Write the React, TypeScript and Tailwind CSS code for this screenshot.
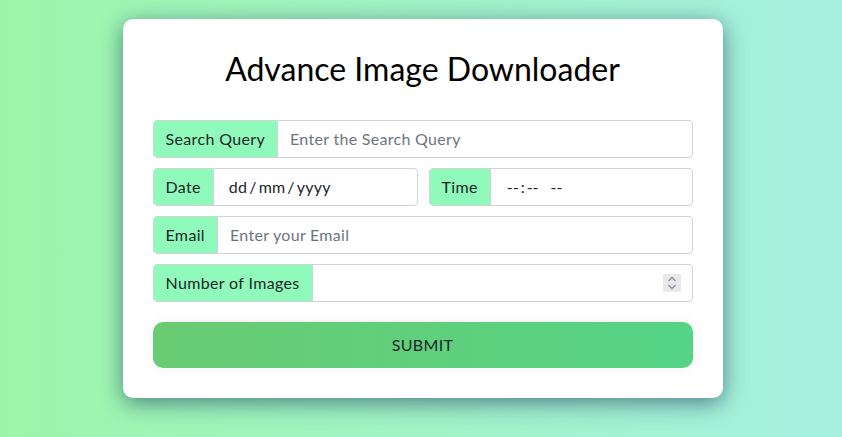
import React from 'react'

const font = { fontFamily: 'Lato, "Open Sans", sans-serif' }

function Label({ children }: { children: React.ReactNode }) {
  return (
    <span className="flex items-center px-3 bg-[#8ffab9] text-[#212529] text-[16px] tracking-[0.35px] whitespace-nowrap border-r border-[#ced4da]">
      {children}
    </span>
  )
}

export default function App() {
  return (
    <div
      className="w-full h-[437px] overflow-hidden bg-gradient-to-r from-[#9cf6aa] to-[#a6efdf] pt-[19px] pl-[3px]"
      style={font}
    >
      <div className="w-[600px] mx-auto bg-white rounded-[10px] shadow-[0_5px_22px_rgba(25,55,95,0.6)] px-[30px] pt-[31px] pb-[30px]">
        <h1 className="text-center text-[32px] leading-[38px] text-black mb-[32px]">Advance Image Downloader</h1>

        <div className="flex flex-col gap-[10px]">
          {/* search */}
          <div className="flex h-[38px] border border-[#ced4da] rounded-[4px] overflow-hidden">
            <Label>Search Query</Label>
            <input
              className="flex-1 px-3 text-[16px] tracking-[0.3px] outline-none placeholder:text-[#6c757d]"
              placeholder="Enter the Search Query"
            />
          </div>

          {/* date + time */}
          <div className="flex gap-[11px]">
            <div className="flex h-[38px] w-[265px] border border-[#ced4da] rounded-[4px] overflow-hidden">
              <Label>Date</Label>
              <div className="flex-1 flex items-center pl-[15px] text-[16px] text-[#212529] tracking-[0.2px]">
                dd<span className="mx-[2px]">/</span>mm<span className="mx-[2px]">/</span>yyyy
              </div>
            </div>
            <div className="flex h-[38px] flex-1 border border-[#ced4da] rounded-[4px] overflow-hidden">
              <Label>Time</Label>
              <div className="flex-1 flex items-center pl-[16px] text-[16px] text-[#212529]">
                --<span className="mx-[2px]">:</span>--<span className="ml-[12px]">--</span>
              </div>
            </div>
          </div>

          {/* email */}
          <div className="flex h-[38px] border border-[#ced4da] rounded-[4px] overflow-hidden">
            <Label>Email</Label>
            <input
              type="email"
              className="flex-1 px-3 text-[16px] tracking-[0.3px] outline-none placeholder:text-[#6c757d]"
              placeholder="Enter your Email"
            />
          </div>

          {/* number */}
          <div className="flex h-[38px] border border-[#ced4da] rounded-[4px] overflow-hidden">
            <Label>Number of Images</Label>
            <div className="flex-1 flex items-center justify-end pr-[11px]">
              <span className="flex items-center justify-center w-[18px] h-[18px] bg-[#e9e9ed]">
                <svg width="10" height="14" viewBox="0 0 10 14" fill="none" stroke="#8a8a94" strokeWidth="1.3">
                  <path d="M1.5 5 L5 1.5 L8.5 5" />
                  <path d="M1.5 9 L5 12.5 L8.5 9" />
                </svg>
              </span>
            </div>
          </div>
        </div>

        <button className="mt-[20px] w-full h-[46px] rounded-[10px] bg-gradient-to-r from-[#69cb72] to-[#54d485] text-[#212529] text-[16px] tracking-[0.3px] shadow-[0_0_14px_rgba(0,0,0,0.06)]">
          SUBMIT
        </button>
      </div>
    </div>
  )
}
